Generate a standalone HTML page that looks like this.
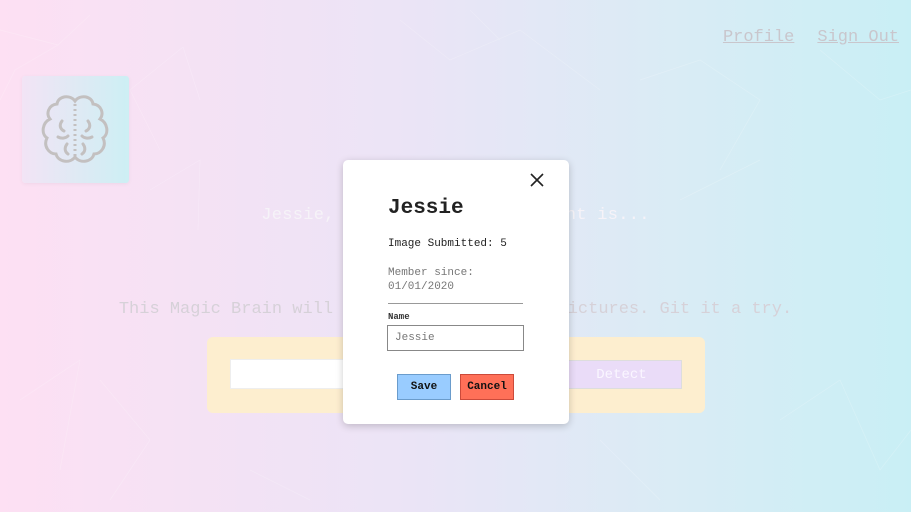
<!DOCTYPE html>
<html><head><meta charset="utf-8"><style>
*{margin:0;padding:0;box-sizing:border-box}
body{width:911px;height:512px;overflow:hidden;position:relative;font-family:"Liberation Mono",monospace;background:linear-gradient(90deg,#fde0f3 0%,#ebe4f6 45%,#d9ecf5 75%,#c9eff5 100%)}
.nav{position:absolute;top:28px;right:12px;font-size:17px;color:#c9c6cc}
.nav span{text-decoration:underline;margin-left:23px}
.logo{position:absolute;left:22px;top:76px;width:107px;height:107px;border-radius:3px;background:linear-gradient(90deg,#f2e4f5,#cdeff4);box-shadow:0 1px 4px rgba(0,0,0,.05)}
.t1{position:absolute;top:206px;left:0;width:911px;text-align:center;font-size:17px;color:#f6f3f8;letter-spacing:.3px}
.t2{position:absolute;top:300px;left:0;width:911px;text-align:center;font-size:17px;color:#d6d1d8}
.form{position:absolute;left:207px;top:337px;width:498px;height:76px;border-radius:6px;background:#fdeecf}
.inp{position:absolute;left:23px;top:22px;width:320px;height:30px;background:#fff;border:1px solid #eee}
.det{position:absolute;left:354px;top:23px;width:121px;height:29px;background:#eadcf8;color:#faf6ff;text-align:center;line-height:29px;font-size:14px;border:1px solid #ddd}
.modal{position:absolute;left:343px;top:160px;width:226px;height:264px;background:#fff;border-radius:5px;box-shadow:0 2px 8px rgba(0,0,0,.2)}
.x{position:absolute;left:187px;top:13px}
h1{position:absolute;left:45px;top:37px;font-size:21px;font-weight:bold;color:#222}
.p1{position:absolute;left:45px;top:78px;font-size:11px;color:#222}
.p2{position:absolute;left:45px;top:106px;font-size:11px;color:#777;line-height:14px}
.hr{position:absolute;left:45px;top:143px;width:135px;border-top:1px solid #999}
.lab{position:absolute;left:45px;top:152px;font-size:9px;font-weight:bold;color:#333}
.name{position:absolute;left:44px;top:165px;width:137px;height:26px;border:1px solid #888;font-size:11px;color:#777;padding:6px 7px}
.b{position:absolute;top:214px;width:54px;height:26px;font-size:11px;font-weight:bold;text-align:center;line-height:24px;color:#111}
.save{left:54px;background:#99ccff;border:1px solid #6a9ccc}
.can{left:117px;background:#ff7058;border:1px solid #cc4a3a}
</style></head><body>
<svg style="position:absolute;left:0;top:0" width="911" height="512"><g stroke="#fff" stroke-opacity=".22" fill="none" stroke-width=".7">
<path d="M0 30L58 45L90 15M58 45L15 70L0 100M183 47L130 90L160 150M200 100L183 47M150 190L200 160L198 230M400 20L450 60L520 30L600 90M470 10L500 40M640 80L700 60L760 100L720 170M680 200L760 160M820 50L880 100L911 90M20 400L80 360L60 470M110 500L150 440L100 380M780 420L840 380L880 470L911 430M600 440L660 500M250 470L310 500"/></g></svg>
<div class="nav"><span>Profile</span><span>Sign Out</span></div>
<div class="logo"><svg width="107" height="107" viewBox="0 0 107 107"><g stroke="#c3c0c0" stroke-width="3" fill="none" stroke-linecap="round"><path d="M53 25C48 18 36 20 35 28C26 29 24 38 28 43C20 47 19 58 25 62C21 70 27 78 34 78C36 86 48 88 53 81C58 88 70 86 72 78C79 78 85 70 81 62C87 58 86 47 78 43C82 38 80 29 71 28C70 20 58 18 53 25Z"/><path d="M53 28V80" stroke-dasharray="2 3" stroke-linecap="butt"/><path d="M40 45C37 49 38 53 42 55M66 45C69 49 68 53 64 55M36 61C40 63 44 62 46 60M70 61C66 63 62 62 60 60M45 68C42 72 43 76 46 78M61 68C64 72 63 76 60 78"/></g></svg></div>
<div class="t1">Jessie, your current rank count is...</div>
<div class="t2">This Magic Brain will detect faces in your pictures. Git it a try.</div>
<div class="form"><div class="inp"></div><div class="det">Detect</div></div>
<div class="modal">
<svg class="x" width="14" height="14"><path d="M1 1L13 13M13 1L1 13" stroke="#222" stroke-width="1.6"/></svg>
<h1>Jessie</h1>
<div class="p1">Image Submitted: 5</div>
<div class="p2">Member since:<br>01/01/2020</div>
<div class="hr"></div>
<div class="lab">Name</div>
<div class="name">Jessie</div>
<div class="b save">Save</div><div class="b can">Cancel</div>
</div>
</body></html>
